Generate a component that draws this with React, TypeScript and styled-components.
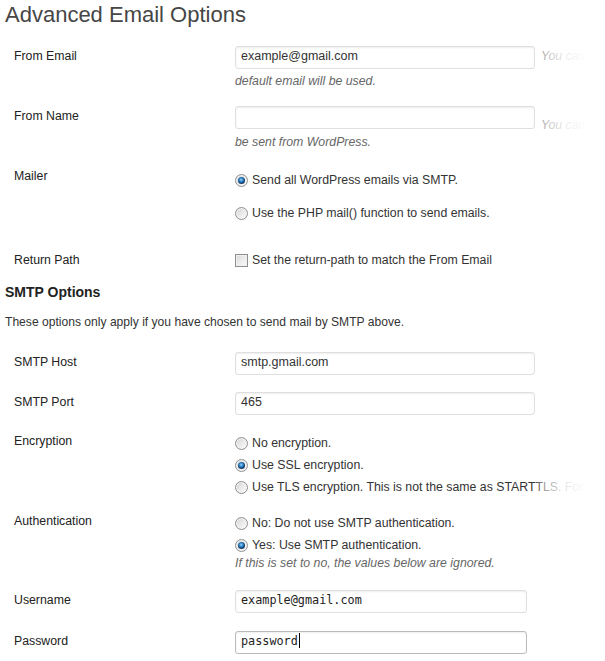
import React from "react";
import styled, { createGlobalStyle, css } from "styled-components";

const GlobalStyle = createGlobalStyle`
  html, body {
    margin: 0;
    padding: 0;
    background: #ffffff;
  }
  body {
    font-family: "Liberation Sans", Arial, sans-serif;
    font-size: 12.3px;
    color: #333333;
  }
`;

const Page = styled.div`
  position: relative;
  width: 605px;
  height: 661px;
  overflow: hidden;
  background: #ffffff;
`;

const Title = styled.h2`
  margin: 0;
  padding: 0 0 0 5px;
  font-family: "Liberation Sans", Arial, sans-serif;
  font-size: 22px;
  font-weight: 400;
  line-height: 29px;
  color: #464646;
  white-space: nowrap;
`;

const Row = styled.div<{ $pt: number }>`
  display: grid;
  grid-template-columns: 221px 1fr;
  align-items: start;
  padding: ${(p) => p.$pt}px 0 0 14px;
`;

const Label = styled.div<{ $offset?: number }>`
  margin-top: ${(p) => p.$offset ?? 0}px;
  font-size: 12.3px;
  line-height: 16px;
  color: #222222;
  white-space: nowrap;
`;

const Field = styled.div<{ $gap?: number }>`
  display: flex;
  flex-direction: column;
  gap: ${(p) => p.$gap ?? 0}px;
  min-width: 0;
`;

const InputLine = styled.div`
  display: flex;
  align-items: baseline;
  gap: 6px;
  white-space: nowrap;
`;

const TextBox = styled.div<{ $width: number; $mono?: boolean; $focused?: boolean }>`
  box-sizing: border-box;
  flex: none;
  width: ${(p) => p.$width}px;
  height: 23px;
  padding: 1px 5px;
  border: 1px solid ${(p) => (p.$focused ? "#bbbbbb" : "#dfdfdf")};
  border-radius: 3px;
  background: #ffffff;
  box-shadow: inset 0 1px 2px rgba(0, 0, 0, 0.07);
  font-size: 12.5px;
  line-height: 16px;
  color: #333333;
  white-space: nowrap;
  overflow: hidden;
  ${(p) =>
    p.$mono &&
    css`
      font-family: "DejaVu Sans Mono", "Liberation Mono", monospace;
      font-size: 11.8px;
      color: #222222;
    `}
`;

const Caret = styled.span`
  display: inline-block;
  width: 1px;
  height: 15px;
  margin-left: 1px;
  background: #000000;
  vertical-align: -3px;
`;

const Description = styled.span<{ $mt?: number }>`
  display: block;
  margin-top: ${(p) => p.$mt ?? 0}px;
  font-size: 12.3px;
  line-height: 16px;
  font-style: italic;
  color: #666666;
  white-space: nowrap;
`;

const InlineDescription = styled.span`
  font-size: 12.3px;
  font-style: italic;
  color: #666666;
`;

const OptionLine = styled.div`
  display: flex;
  align-items: center;
  gap: 4px;
  height: 16px;
  font-size: 12.3px;
  line-height: 16px;
  color: #333333;
  white-space: nowrap;
`;

const Radio = styled.span<{ $checked?: boolean }>`
  position: relative;
  flex: none;
  box-sizing: border-box;
  width: 13px;
  height: 13px;
  border-radius: 50%;
  border: 1px solid #8e8f8f;
  background: linear-gradient(135deg, #cfcfcf 0%, #e8e8e8 45%, #fbfbfb 100%);
  box-shadow: inset 0 0 0 1px #f3f3f3;
  ${(p) =>
    p.$checked &&
    css`
      &::after {
        content: "";
        position: absolute;
        left: 2px;
        top: 2px;
        width: 7px;
        height: 7px;
        border-radius: 50%;
        background: radial-gradient(
          circle at 45% 40%,
          #9ad6ff 0,
          #3b8fd0 1.6px,
          #1c5d97 2.8px,
          #173f66 3.5px
        );
      }
    `}
`;

const Checkbox = styled.span`
  flex: none;
  box-sizing: border-box;
  width: 13px;
  height: 13px;
  border: 1px solid #8e8f8f;
  background: linear-gradient(135deg, #d6d6d6 0%, #ececec 50%, #fbfbfb 100%);
  box-shadow: inset 0 0 0 1px #f0f0f0;
`;

const SectionTitle = styled.h3`
  margin: 15px 0 0 0;
  padding-left: 5px;
  font-size: 14px;
  font-weight: 700;
  line-height: 18px;
  color: #222222;
`;

const SectionText = styled.p`
  margin: 13px 0 0 0;
  padding-left: 5px;
  font-size: 12.1px;
  line-height: 16px;
  color: #333333;
  white-space: nowrap;
`;

const Fade = styled.div`
  position: absolute;
  top: 0;
  right: 0;
  width: 72px;
  height: 100%;
  pointer-events: none;
  background: linear-gradient(
    to right,
    rgba(255, 255, 255, 0) 0%,
    rgba(255, 255, 255, 0.55) 17%,
    rgba(255, 255, 255, 0.88) 45%,
    #ffffff 78%
  );
`;

export default function App() {
  return (
    <>
      <GlobalStyle />
      <Page>
        <Title>Advanced Email Options</Title>

        <Row $pt={17}>
          <Label $offset={1.5}>From Email</Label>
          <Field>
            <InputLine>
              <TextBox $width={300}>example@gmail.com</TextBox>
              <InlineDescription>
                You can specify the email address that emails should be sent from. If you leave this blank, the
              </InlineDescription>
            </InputLine>
            <Description $mt={4}>default email will be used.</Description>
          </Field>
        </Row>

        <Row $pt={17}>
          <Label $offset={1.5}>From Name</Label>
          <Field>
            <InputLine>
              <TextBox $width={300}></TextBox>
              <InlineDescription>
                You can specify the name that emails should be sent from. If you leave this blank, the emails will
              </InlineDescription>
            </InputLine>
            <Description $mt={2}>be sent from WordPress.</Description>
          </Field>
        </Row>

        <Row $pt={22}>
          <Label $offset={-4.5}>Mailer</Label>
          <Field $gap={17}>
            <OptionLine>
              <Radio $checked />
              Send all WordPress emails via SMTP.
            </OptionLine>
            <OptionLine>
              <Radio />
              Use the PHP mail() function to send emails.
            </OptionLine>
          </Field>
        </Row>

        <Row $pt={31}>
          <Label>Return Path</Label>
          <Field>
            <OptionLine>
              <Checkbox />
              Set the return-path to match the From Email
            </OptionLine>
          </Field>
        </Row>

        <SectionTitle>SMTP Options</SectionTitle>
        <SectionText>These options only apply if you have chosen to send mail by SMTP above.</SectionText>

        <Row $pt={22}>
          <Label $offset={1.5}>SMTP Host</Label>
          <Field>
            <TextBox $width={300}>smtp.gmail.com</TextBox>
          </Field>
        </Row>

        <Row $pt={17}>
          <Label $offset={1.5}>SMTP Port</Label>
          <Field>
            <TextBox $width={300}>465</TextBox>
          </Field>
        </Row>

        <Row $pt={20}>
          <Label $offset={-2}>Encryption</Label>
          <Field $gap={6}>
            <OptionLine>
              <Radio />
              No encryption.
            </OptionLine>
            <OptionLine>
              <Radio $checked />
              Use SSL encryption.
            </OptionLine>
            <OptionLine>
              <Radio />
              Use TLS encryption. This is not the same as STARTTLS. For most servers SSL is the recommended option.
            </OptionLine>
          </Field>
        </Row>

        <Row $pt={20}>
          <Label $offset={-2}>Authentication</Label>
          <Field $gap={6}>
            <OptionLine>
              <Radio />
              No: Do not use SMTP authentication.
            </OptionLine>
            <OptionLine>
              <Radio $checked />
              Yes: Use SMTP authentication.
            </OptionLine>
            <Description $mt={-4}>If this is set to no, the values below are ignored.</Description>
          </Field>
        </Row>

        <Row $pt={19}>
          <Label $offset={1.5}>Username</Label>
          <Field>
            <TextBox $width={292} $mono>example@gmail.com</TextBox>
          </Field>
        </Row>

        <Row $pt={18}>
          <Label $offset={1.5}>Password</Label>
          <Field>
            <TextBox $width={292} $mono $focused>
              password
              <Caret />
            </TextBox>
          </Field>
        </Row>

        <Fade />
      </Page>
    </>
  );
}
